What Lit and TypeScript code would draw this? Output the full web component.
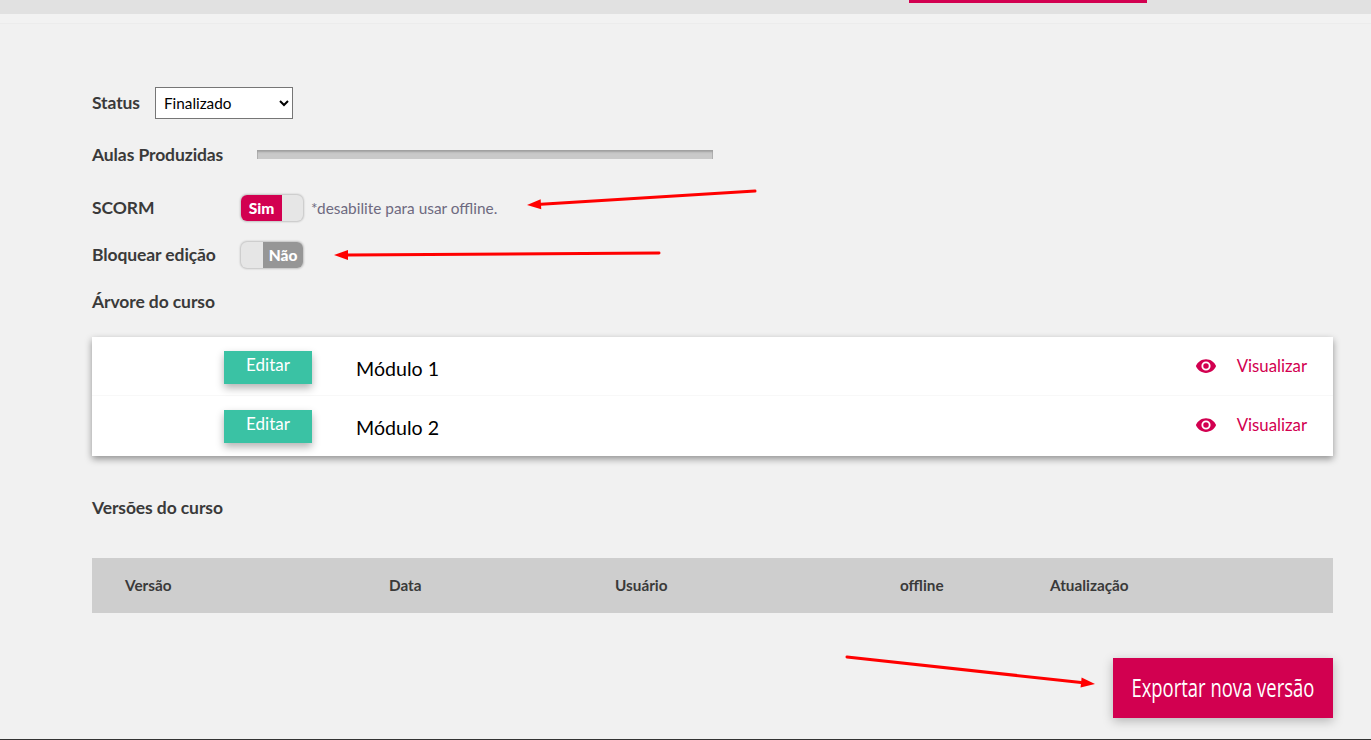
import { LitElement, html, css, svg } from "lit";
import { customElement } from "lit/decorators.js";

const arrow = (x1: number, y1: number, x2: number, y2: number, len = 14, half = 5) => {
  const a = Math.atan2(y2 - y1, x2 - x1);
  const c = Math.cos(a), s = Math.sin(a);
  const bx = x2 - c * len, by = y2 - s * len;
  const p = `${x2},${y2} ${bx - s * half},${by + c * half} ${bx + s * half},${by - c * half}`;
  return svg`<line x1=${x1} y1=${y1} x2=${bx} y2=${by} stroke="#ff0000" stroke-width="3" stroke-linecap="round"></line><polygon points=${p} fill="#ff0000"></polygon>`;
};

@customElement("app-root")
export class AppRoot extends LitElement {
  static styles = css`
    :host { display: block; position: relative; height: 740px; overflow: hidden; background: #f1f1f1; font-family: Lato, "Liberation Sans", sans-serif; color: #3a3a3a; box-sizing: border-box; }
    .top { height: 14px; background: #e1e1e1; padding-left: 909px; }
    .tab { width: 238px; height: 3px; background: #d20050; }
    .strip { height: 9px; background: #f2f2f2; border-bottom: 1px solid #ececec; }
    .content { padding: 0 38px 0 92px; display: flex; flex-direction: column; }
    .row { display: flex; align-items: center; }
    .label { font-size: 17.5px; font-weight: 700; letter-spacing: -0.1px; line-height: 22px; white-space: nowrap; }
    .status { margin-top: 62px; height: 34px; }
    .status .label { width: 63px; }
    select { width: 138px; height: 32px; border: 1px solid #767676; border-radius: 0; background: #fff; font-family: Lato, sans-serif; font-size: 15.3px; color: #000; padding: 0 4px; margin: 0; }
    .aulas { margin-top: 18px; height: 34px; }
    .aulas .label { width: 165px; }
    .bar { width: 456px; height: 9px; margin-top: -1px; background: #c9c9c9; box-shadow: inset 0 3px 2px -1px #a0a0a0, inset -1px 0 0 #b0b0b0, inset 1px 0 0 #b0b0b0; }
    .scorm { margin-top: 22px; height: 28px; }
    .lock { margin-top: 19px; height: 28px; }
    .scorm .label, .lock .label { width: 149px; }
    .toggle { display: flex; width: 62px; height: 26px; border-radius: 6px; overflow: hidden; background: #e6e6e6; box-shadow: 0 0 2px 1px rgba(0,0,0,.2); font-size: 15.5px; font-weight: 900; color: #fff; }
    .toggle span { display: flex; align-items: center; justify-content: center; }
    .on { width: 41px; background: #d20050; }
    .off { width: 40px; margin-left: auto; background: #969696; }
    .hint { margin-left: 8px; font-size: 15.4px; color: #6e6a80; }
    .tree { margin-top: 19px; height: 28px; }
    .card { margin-top: 21px; background: #fff; box-shadow: 0 3px 7px rgba(0,0,0,.4); }
    .item { height: 59px; display: flex; align-items: flex-start; padding: 14px 26px 0 132px; box-sizing: border-box; }
    .item + .item { height: 60px; box-shadow: 0 -1px 0 #f8f8f8; }
    .edit { width: 88px; height: 33px; background: #3ac2a4; color: #fff; font-size: 17px; line-height: 28px; text-align: center; box-shadow: 0 4px 8px rgba(0,0,0,.3); }
    .name { margin-left: 44px; font-size: 19.6px; line-height: 24px; color: #000; margin-top: 6px; }
    .view { margin-left: auto; display: flex; align-items: center; color: #d20050; font-size: 16.8px; line-height: 30px; }
    .view svg { width: 22px; height: 22px; margin-right: 20px; display: block; }
    .versions { margin-top: 39px; height: 26px; }
    .thead { margin-top: 37px; height: 55px; box-sizing: border-box; padding: 0 0 2px 33px; background: #cecece; display: grid; grid-template-columns: 264px 226px 285px 150px 1fr; align-items: center; font-size: 15.3px; font-weight: 700; color: #3a3a3a; }
    .actions { margin-top: 45px; display: flex; justify-content: flex-end; }
    .export { width: 220px; height: 60px; box-sizing: border-box; padding-bottom: 3px; background: #d20050; color: #fff; display: flex; align-items: center; justify-content: center; box-shadow: 0 3px 10px rgba(0,0,0,.25); font-family: "Open Sans", sans-serif; font-size: 26px; white-space: nowrap; }
    .export span { display: inline-block; transform: scaleX(.71); }
    .rule { position: absolute; left: 0; right: 0; bottom: 0; height: 1px; background: #333; }
    .arrows { position: absolute; inset: 0; width: 1371px; height: 740px; pointer-events: none; }
  `;

  private eye() {
    return html`<svg viewBox="0 0 24 24"><path fill="#d20050" d="M12 4.500C7 4.500 2.700 7.600 1 12c1.700 4.400 6 7.500 11 7.500s9.300-3.100 11-7.500c-1.700-4.400-6-7.500-11-7.500zM12 17a5 5 0 1 1 0-10 5 5 0 0 1 0 10zm0-8a3 3 0 1 0 0 6 3 3 0 0 0 0-6z"></path></svg>`;
  }

  private item(name: string) {
    return html`<div class="item">
      <div class="edit">Editar</div>
      <div class="name">${name}</div>
      <div class="view">${this.eye()}Visualizar</div>
    </div>`;
  }

  render() {
    return html`
      <div class="top"><div class="tab"></div></div>
      <div class="strip"></div>
      <div class="content">
        <div class="row status"><div class="label">Status</div>
          <select><option>Finalizado</option></select></div>
        <div class="row aulas"><div class="label">Aulas Produzidas</div><div class="bar"></div></div>
        <div class="row scorm"><div class="label">SCORM</div>
          <div class="toggle"><span class="on">Sim</span></div>
          <div class="hint">*desabilite para usar offline.</div></div>
        <div class="row lock"><div class="label">Bloquear edição</div>
          <div class="toggle"><span class="off">Não</span></div></div>
        <div class="row tree"><div class="label">Árvore do curso</div></div>
        <div class="card">${this.item("Módulo 1")}${this.item("Módulo 2")}</div>
        <div class="row versions"><div class="label">Versões do curso</div></div>
        <div class="thead"><div>Versão</div><div>Data</div><div>Usuário</div><div>offline</div><div>Atualização</div></div>
        <div class="actions"><div class="export"><span>Exportar nova versão</span></div></div>
      </div>
      <div class="rule"></div>
      <svg class="arrows" viewBox="0 0 1371 740">
        ${arrow(755, 191, 527, 205)}
        ${arrow(659, 253, 334, 255)}
        ${arrow(847, 657, 1095, 684)}
      </svg>
    `;
  }
}
